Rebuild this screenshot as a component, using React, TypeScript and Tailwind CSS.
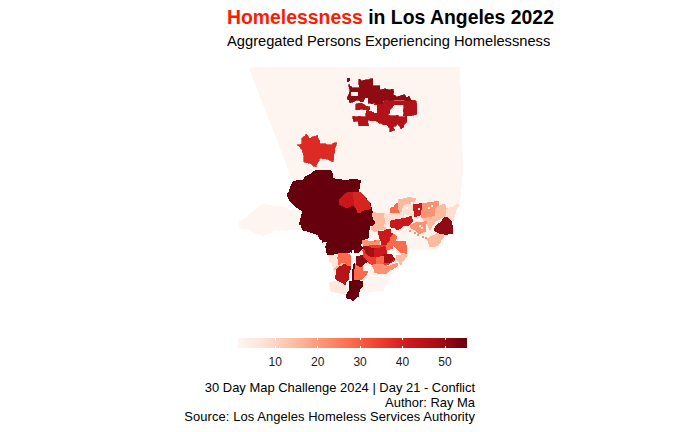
const ticks = [10, 20, 30, 40, 50];

// the map in the picture is a raster, so long polygon edges get broken into small pixel steps
function rough(points: string, seed: number) {
  let state = seed * 7919 + 17;
  const next = () => {
    state = (state * 1103515245 + 12345) & 0x7fffffff;
    return state / 0x7fffffff;
  };
  const pts = points.split(" ").map((p) => p.split(",").map(Number));
  const out: string[] = [];
  pts.forEach(([x, y], i) => {
    const [nx, ny] = pts[(i + 1) % pts.length];
    const steps = Math.max(1, Math.round(Math.hypot(nx - x, ny - y) / 9));
    for (let s = 0; s < steps; s++) {
      const px = x + ((nx - x) * s) / steps + (next() - 0.5) * 4;
      const py = y + ((ny - y) * s) / steps + (next() - 0.5) * 4;
      out.push(`${Math.round(px / 3) * 3},${Math.round(py / 3) * 3}`);
    }
  });
  return out.join(" ");
}

// regions are written in the coordinates of the zoomed crops (3x), hence the group transforms
const northCounty: [string, string][] = [
  ["#b21218", "440,130 460,130 460,122 560,122 560,167 520,167 520,135 490,135 475,165 530,170 530,185 515,208 505,195 490,200 495,210 480,217 478,205 470,195 440,185 415,180 415,197 387,197 387,185 370,185 370,170 405,170 410,150 378,150 378,130 400,130 420,140"],
  ["#900a12", "387,60 428,60 428,78 450,78 450,87 490,87 490,105 497,105 500,110 525,105 530,115 538,108 548,122 460,122 460,130 410,132 405,115 398,128 385,122 360,128 352,115 358,100 355,72 368,85 387,85"],
  ["#dc2a25", "200,255 215,255 218,235 228,222 240,235 262,225 272,250 295,255 320,250 315,265 310,305 290,295 270,295 258,320 225,305 215,270"],
];

const basin: [string, string][] = [
  ["#fee8de", "298,340 325,332 345,345 358,360 348,375 320,368 305,360"],
  ["#fee5d9", "295,256 325,252 325,292 312,300 315,312 308,290"],
  ["#fff0e8", "430,130 530,125 560,135 640,130 620,195 590,205 540,180 480,190 440,190"],
  ["#67000d", "190,35 215,32 235,15 250,5 255,0 305,0 308,25 320,28 335,32 365,28 392,32 385,65 378,70 395,70 420,100 420,112 430,130 437,165 418,170 415,205 395,210 390,230 400,235 380,250 366,250 365,240 350,250 330,248 320,250 295,256 285,225 260,190 222,180 208,160 220,125 180,95 172,72"],
  ["#d8241f", "370,70 393,68 420,100 420,115 385,130 372,105"],
  ["#c9151b", "330,85 345,72 370,70 372,105 345,115 330,100"],
  ["#fb6a4a", "325,250 345,250 365,258 366,295 352,290 345,278 325,285"],
  ["#fcbba1", "312,298 325,285 345,280 330,295"],
  ["#b81419", "322,297 345,282 360,290 358,320 347,345 315,325 322,310"],
  ["#fb6a4a", "368,282 395,280 400,305 412,305 395,330 368,332"],
  ["#8f0a12", "380,262 395,255 415,265 410,275 395,290 382,285"],
  ["#67000d", "368,280 372,280 372,335 400,335 395,350 385,365 388,378 368,392 346,380 358,360 358,335 366,335"],
  ["#fc9272", "395,213 450,215 450,235 430,232 400,228"],
  ["#ef3b2c", "400,230 470,225 470,250 495,268 478,283 465,285 462,292 435,290 420,282 402,262"],
  ["#a50f15", "400,232 435,235 430,260 405,250"],
  ["#cb181d", "435,240 465,228 470,250 455,265 435,260"],
  ["#a50f15", "460,255 480,250 495,268 475,280 462,280"],
  ["#fb6a4a", "440,265 462,262 462,285 440,285"],
  ["#fc9272", "430,285 470,285 478,290 505,278 500,290 480,300 470,312 440,312 432,300"],
  ["#fcbba1", "498,260 530,252 530,262 510,285"],
  ["#fb6a4a", "490,215 525,215 532,235 530,252 500,240 488,225"],
  ["#fcbba1", "430,130 445,130 465,135 465,180 450,180 445,185 425,180 432,165 437,165"],
  ["#cb181d", "445,185 478,180 490,195 472,225 455,222 450,205"],
  ["#fb6a4a", "470,225 490,195 500,205 485,235 470,240"],
  ["#fb6a4a", "483,112 505,100 512,130 497,142 483,130"],
  ["#fcbba1", "505,90 530,85 555,85 548,105 525,105 520,125 508,125"],
  ["#fee0d2", "520,105 550,105 555,140 520,132"],
  ["#fee0d2", "465,135 485,130 520,132 520,145 480,155 465,172"],
  ["#fcbba1", "575,140 618,135 622,150 600,178 590,160"],
  ["#fc9272", "540,165 590,152 585,185 570,190 545,175"],
  ["#cb181d", "480,155 520,145 545,140 550,155 530,168 520,165 505,180 485,170"],
  ["#cb181d", "550,105 578,103 578,135 555,140"],
  ["#fc9272", "578,100 628,96 618,135 590,142 575,140"],
  ["#fcbba1", "620,110 645,105 650,135 625,152 615,135"],
  ["#fee0d2", "650,120 668,108 685,102 670,150 660,155 650,138"],
  ["#fcbba1", "590,205 625,190 640,195 625,225 600,232"],
  ["#8f0a12", "610,180 645,140 665,155 668,190 640,195"],
];

// single raster cells scattered around the small cities: x, y, colour
const specks: [number, number, string][] = [
  [537, 180, "#fc9272"], [552, 186, "#fc9272"], [561, 192, "#fc9272"], [576, 198, "#fc9272"], [585, 201, "#fc9272"],
  [432, 210, "#fb6a4a"], [594, 111, "#fff5f0"], [603, 105, "#fff5f0"], [564, 114, "#fff5f0"], [567, 165, "#fff5f0"],
  [573, 171, "#fff5f0"], [543, 96, "#fff5f0"], [528, 111, "#fff5f0"],
];

function LaMap() {
  return (
    <svg viewBox="230 62 240 245" shapeRendering="crispEdges" className="ml-[230px] mt-[10px] h-[245px] w-[240px]">
      {/* county, coast and islands */}
      <polygon fill="#fff5f0" points="249,68 256,67 460,67 463,170 460,203 456,205 452,220 443,237 438,250 407,250 407,257 398,267 386,285 384,291 363,292 358,290 358,250 293,182" />
      <polygon fill="#fff5f0" points={rough("28,155 100,100 220,125 225,180 130,182 100,200 60,180 28,175", 1)} transform="translate(230 170) scale(0.3333)" />
      <g transform="translate(230 60) scale(0.3333)">
        {northCounty.map(([fill, points], i) => (
          <polygon key={points} fill={fill} stroke={fill} strokeWidth={2} points={rough(points, i + 2)} />
        ))}
        <polygon fill="#fff5f0" points="422,135 440,135 440,160 418,152" />
        <polygon fill="#fff5f0" points="405,115 413,115 413,135 403,130" />
        <polygon fill="#fff5f0" points="362,97 385,97 385,108 362,108" />
        <polygon fill="#900a12" points="352,55 360,55 358,66 352,66" />
      </g>
      <g transform="translate(230 170) scale(0.3333)">
        {basin.map(([fill, points], i) => (
          <polygon key={points} fill={fill} stroke={fill} strokeWidth={3} points={rough(points, i + 5)} />
        ))}
        {specks.map(([x, y, fill]) => (
          <rect key={`${x}-${y}`} x={x} y={y} width={6} height={6} fill={fill} />
        ))}
        <polygon fill="#fff5f0" points="278,216 290,216 288,228 280,228" />
        <polygon fill="#ffffff" points="365,240 371,240 371,280 368,296 362,296" />
      </g>
    </svg>
  );
}

export default function App() {
  return (
    <div className="h-[432px] w-[700px] overflow-hidden bg-white font-['Liberation_Sans',Arial,sans-serif] text-black">
      <div className="pl-[227px] pt-[6px]">
        <h1 className="text-[19.4px] font-bold leading-[22px]">
          <span className="text-[#ff1a00]">Homelessness</span> in Los Angeles 2022
        </h1>
        <p className="mt-[3px] text-[14.7px] leading-[21px]">Aggregated Persons Experiencing Homelessness</p>
      </div>
      <LaMap />
      {/* legend */}
      <div className="relative ml-[238px] mt-[31px] h-[10px] w-[229px] bg-[linear-gradient(to_right,#fff5f0,#fee0d2,#fcbba1,#fc9272,#fb6a4a,#ef3b2c,#cb181d,#a50f15,#67000d)]">
        {ticks.map((t) => (
          <div key={t} className="absolute top-0 h-full w-px border-y-[2px] border-white" style={{ left: (t - 10) * 4.245 + 37 }} />
        ))}
      </div>
      <div className="ml-[254px] mt-[7px] flex text-[12px] leading-[14px] text-[#1a1a1a]">
        {ticks.map((t) => (
          <span key={t} className="w-[42.45px] text-center">{t}</span>
        ))}
      </div>
      <div className="mt-[12px] w-[475px] text-right text-[12.95px] leading-[14.6px]">
        <p>30 Day Map Challenge 2024 | Day 21 - Conflict</p>
        <p>Author: Ray Ma</p>
        <p className="tracking-[0.08px]">Source: Los Angeles Homeless Services Authority</p>
      </div>
    </div>
  );
}
